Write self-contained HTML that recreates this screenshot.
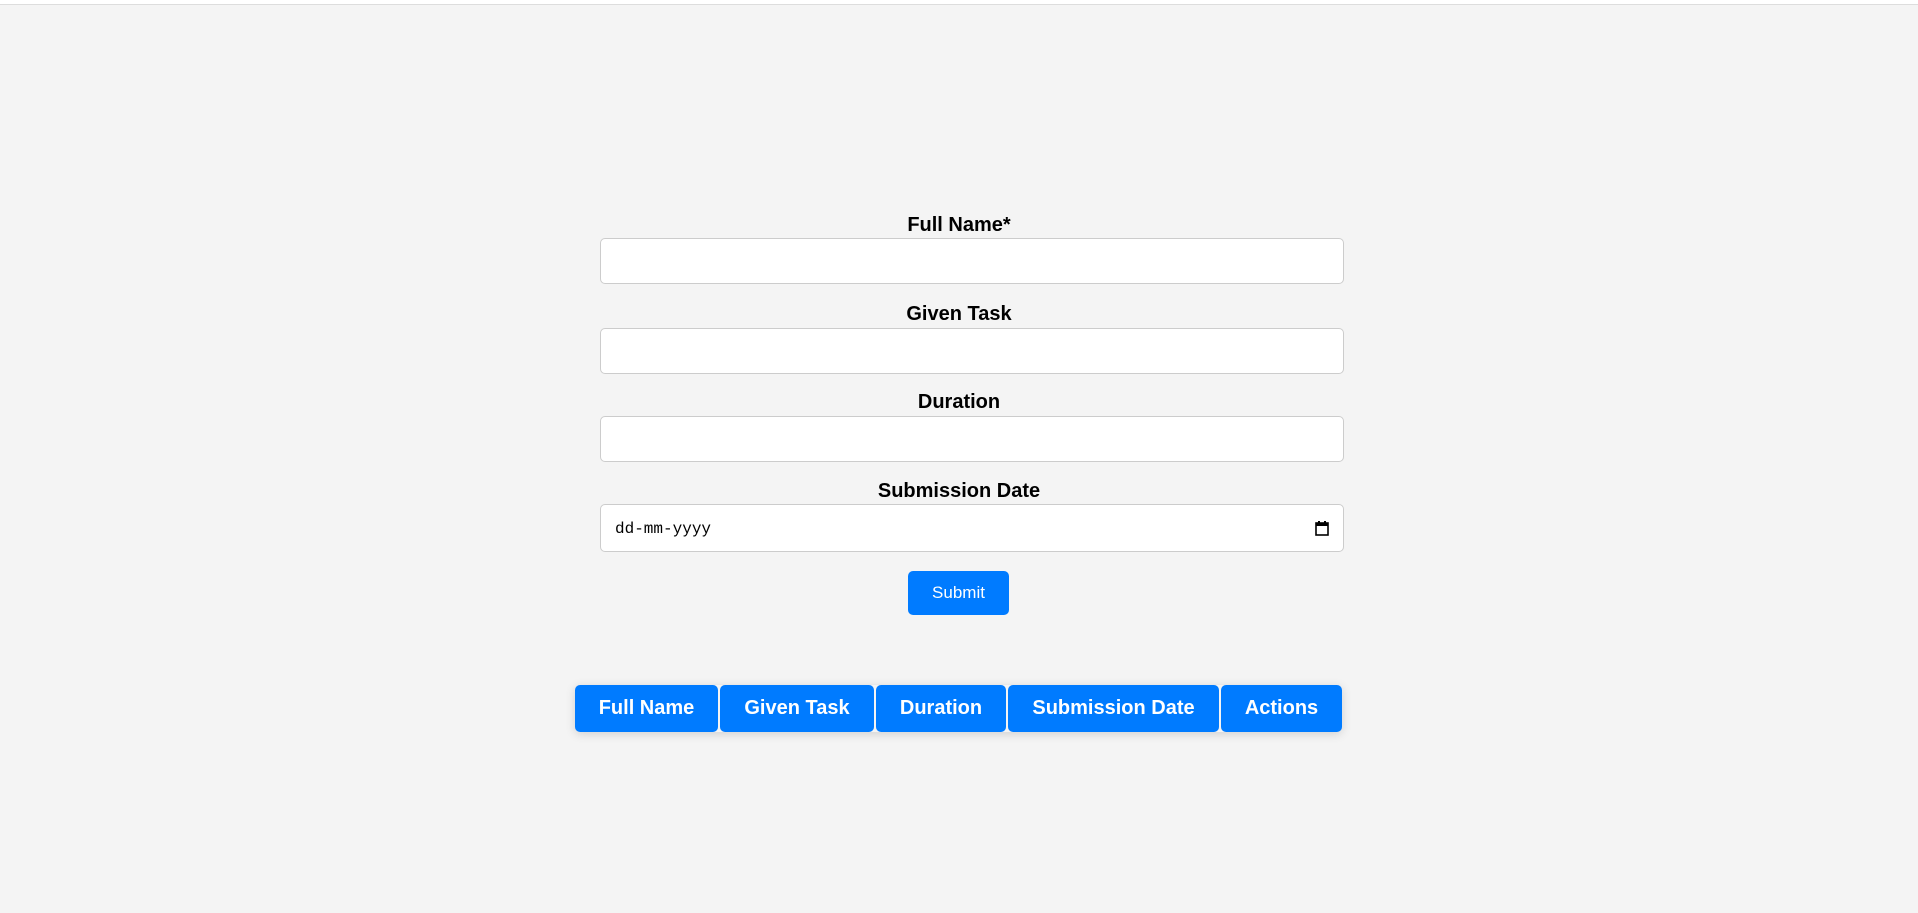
<!DOCTYPE html>
<html><head><style>
html,body{margin:0;padding:0;}
body{width:1918px;height:913px;background:#f4f4f4;font-family:"Liberation Sans",Arial,sans-serif;position:relative;overflow:hidden;}
.top{position:absolute;left:0;top:0;width:1918px;height:4px;background:#fff;border-bottom:1px solid #ddd;}
.lbl{position:absolute;left:587px;width:744px;text-align:center;font-weight:bold;font-size:20px;color:#000;line-height:22px;}
.in{position:absolute;left:600px;width:744px;box-sizing:border-box;background:#fff;border:1px solid #ccc;border-radius:5px;}
.btn{position:absolute;left:908px;top:571px;width:101px;height:44px;background:#007bff;border-radius:5px;color:#fff;font-size:17px;text-align:center;line-height:44px;}
.tbl{position:absolute;left:575px;top:685px;height:47px;width:767px;display:flex;box-shadow:0 2px 10px rgba(0,0,0,0.15);border-radius:5px;}
.tbl div{background:#007bff;color:#fff;font-weight:bold;font-size:20px;line-height:47px;text-align:center;border-radius:5px;margin-right:2px;}
</style></head><body>
<div class="top"></div>
<div class="lbl" style="top:214px">Full Name*</div>
<div class="in" style="top:238px;height:46px"></div>
<div class="lbl" style="top:303px">Given Task</div>
<div class="in" style="top:328px;height:46px"></div>
<div class="lbl" style="top:391px">Duration</div>
<div class="in" style="top:416px;height:46px"></div>
<div class="lbl" style="top:480px">Submission Date</div>
<div class="in" style="top:504px;height:48px">
<span style="position:absolute;left:14px;top:15px;font-family:'Liberation Mono',monospace;font-size:16px;color:#000">dd-mm-yyyy</span>
<svg style="position:absolute;right:14px;top:16px" width="14" height="15" viewBox="0 0 14 15"><rect x="1" y="2" width="12" height="12" fill="none" stroke="#000" stroke-width="1.6"/><rect x="1" y="2" width="12" height="3" fill="#000"/><rect x="3" y="0" width="2" height="3" fill="#000"/><rect x="9" y="0" width="2" height="3" fill="#000"/></svg>
</div>
<div class="btn">Submit</div>
<div class="tbl">
<div style="width:143px">Full Name</div>
<div style="width:154px">Given Task</div>
<div style="width:130px">Duration</div>
<div style="width:211px">Submission Date</div>
<div style="width:121px;margin-right:0">Actions</div>
</div>
</body></html>
